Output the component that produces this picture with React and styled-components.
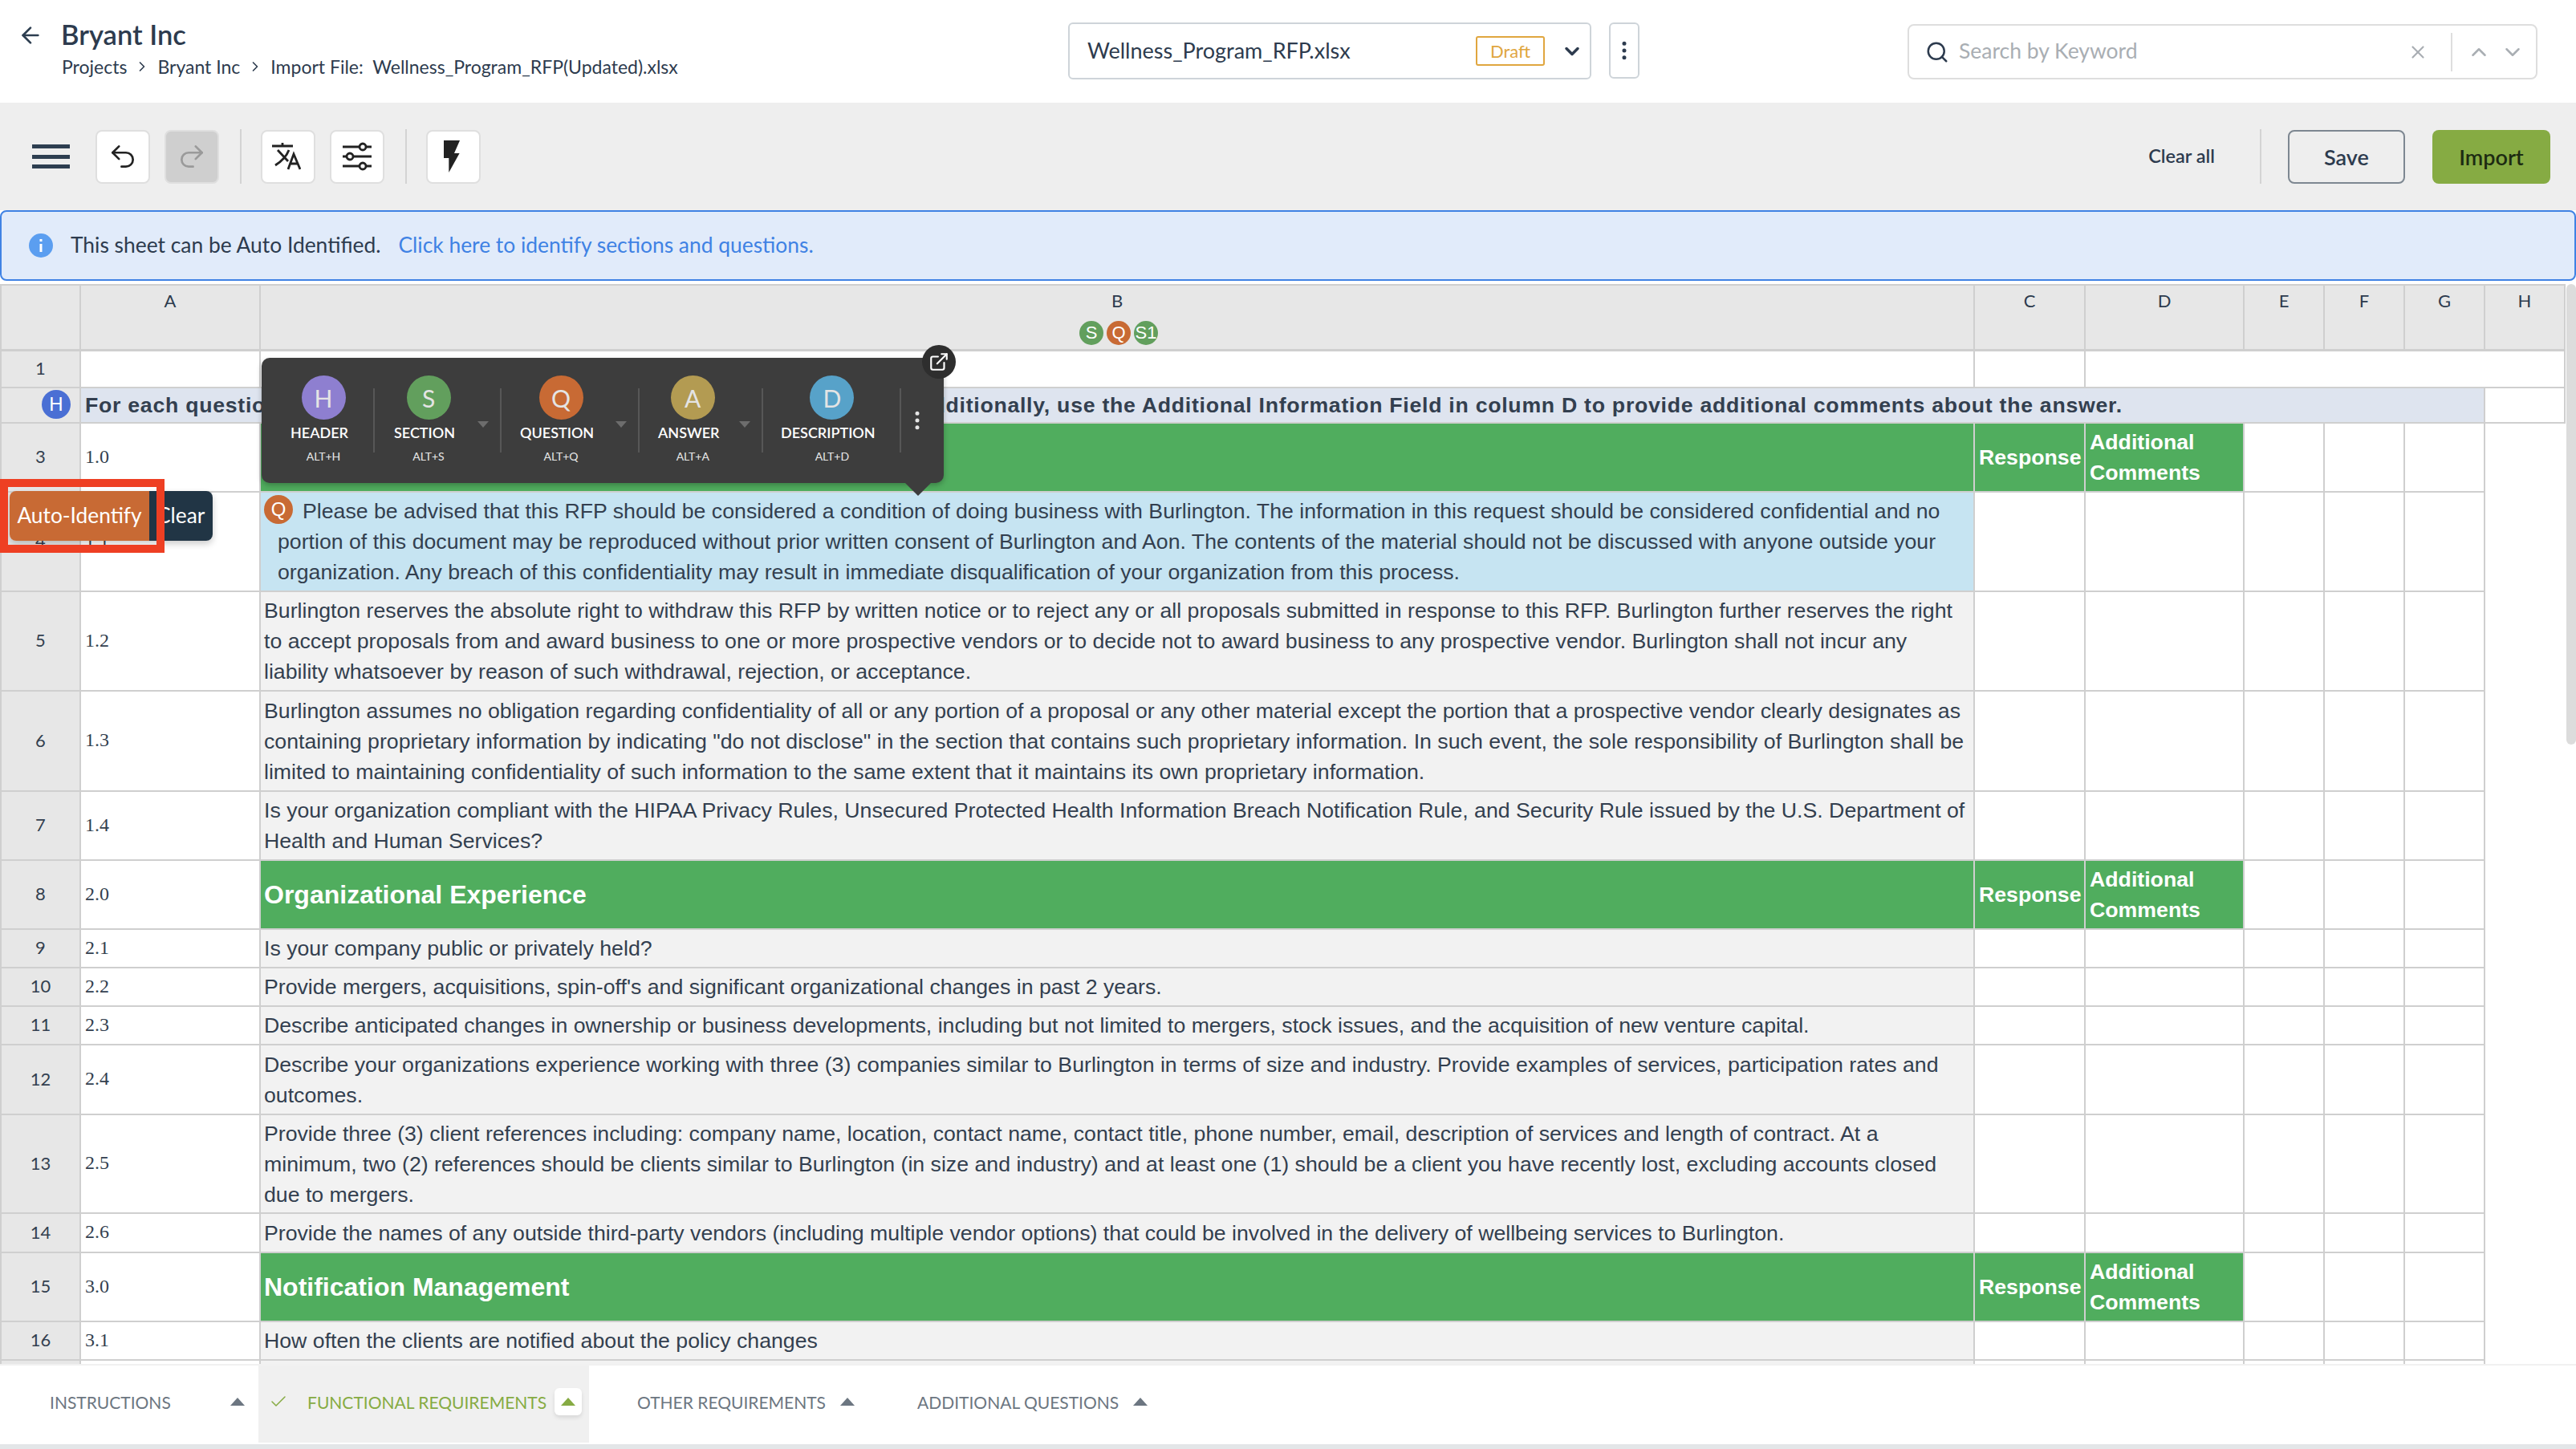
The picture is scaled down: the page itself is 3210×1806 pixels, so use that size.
import React from "react";
import styled, { createGlobalStyle } from "styled-components";
import {
  ArrowLeft,
  ChevronRight,
  ChevronDown,
  ChevronUp,
  EllipsisVertical,
  ExternalLink,
  Search,
  X,
  Undo2,
  Redo2,
  Check,
} from "lucide-react";

const UI_FONT = `"Lato", "Noto Sans", sans-serif`;
const SHEET_FONT = `"Liberation Sans", Arial, sans-serif`;

const GlobalStyle = createGlobalStyle`
  html, body {
    margin: 0;
    padding: 0;
    background: #fff;
    font-family: ${UI_FONT};
  }
`;

const Page = styled.div`
  width: 3210px;
  height: 1806px;
  display: flex;
  flex-direction: column;
  overflow: hidden;
  color: #2d3b4e;
`;

/* top header */
const Header = styled.header`
  height: 128px;
  flex: none;
  display: flex;
  align-items: flex-start;
  background: #fff;
`;
const BackSlot = styled.div`
  width: 76px;
  padding: 28px 0 0 22px;
  box-sizing: border-box;
  color: #2d3e50;
`;
const TitleBlock = styled.div`
  width: 1255px;
  padding-top: 20px;
`;
const Title = styled.div`
  font-size: 34.5px;
  font-weight: 600;
  line-height: 46px;
`;
const Crumbs = styled.div`
  display: flex;
  align-items: center;
  gap: 9px;
  font-size: 23px;
  line-height: 30px;
  margin: 2px 0 0 1px;
`;
const FileSelect = styled.div`
  width: 652px;
  height: 71px;
  margin-top: 28px;
  box-sizing: border-box;
  border: 2px solid #ced4d9;
  border-radius: 6px;
  display: flex;
  align-items: center;
  padding: 0 8px 0 22px;
`;
const FileName = styled.span`
  flex: 1;
  font-size: 27px;
  margin-bottom: 3px;
`;
const DraftBadge = styled.span`
  width: 86px;
  height: 37px;
  box-sizing: border-box;
  border: 2px solid #e0a63f;
  border-radius: 3px;
  color: #e0a63f;
  font-size: 22px;
  display: flex;
  align-items: center;
  justify-content: center;
  margin-right: 20px;
`;
const KebabButton = styled.div`
  width: 38px;
  height: 70px;
  margin: 28px 0 0 22px;
  box-sizing: border-box;
  border: 2px solid #ced4d9;
  border-radius: 6px;
  display: flex;
  align-items: center;
  justify-content: center;
`;
const SearchBox = styled.div`
  width: 785px;
  height: 69px;
  margin: 30px 0 0 334px;
  box-sizing: border-box;
  border: 2px solid #dedede;
  border-radius: 8px;
  display: flex;
  align-items: center;
  padding: 0 14px 0 20px;
`;
const SearchText = styled.span`
  flex: 1;
  margin: 0 0 3px 12px;
  font-size: 26.5px;
  color: #a9aeb3;
`;
const SearchDivider = styled.span`
  width: 2px;
  height: 48px;
  background: #dedede;
  margin: 0 18px 0 28px;
`;

/* toolbar */
const Toolbar = styled.div`
  height: 134px;
  flex: none;
  box-sizing: border-box;
  background: #eeeeee;
  display: flex;
  align-items: center;
  padding: 0 32px 0 40px;
`;
const Burger = styled.div`
  width: 47px;
  height: 30px;
  margin-right: 32px;
  display: flex;
  flex-direction: column;
  justify-content: space-between;
  span {
    height: 5px;
    background: #2d3e50;
  }
`;
const ToolButton = styled.div`
  width: 68px;
  height: 67px;
  box-sizing: border-box;
  border: 2px solid #dfdfdf;
  border-radius: 8px;
  background: ${(p) => (p.$disabled ? "#cfcfcf" : "#fff")};
  color: ${(p) => (p.$disabled ? "#9a9a9a" : "#222")};
  display: flex;
  align-items: center;
  justify-content: center;
  margin-right: ${(p) => p.$gap || 0}px;
  svg {
    margin-right: ${(p) => p.$nudge || 0}px;
  }
`;
const ToolDivider = styled.span`
  width: 2px;
  height: 68px;
  background: #d3d3d3;
  margin: 0 24px 0 26px;
`;
const SaveDivider = styled(ToolDivider)`
  margin: 0 33px 0 56px;
`;
const Spacer = styled.div`
  flex: 1;
`;
const ClearAll = styled.span`
  font-size: 23.5px;
  font-weight: 600;
  margin-top: -2px;
`;
const SaveButton = styled.div`
  width: 146px;
  height: 67px;
  box-sizing: border-box;
  border: 2px solid #7d8791;
  border-radius: 8px;
  font-size: 27px;
  font-weight: 600;
  display: flex;
  align-items: center;
  justify-content: center;
  margin-right: 34px;
`;
const ImportButton = styled(SaveButton)`
  width: 147px;
  border: 0;
  background: #86ab43;
  color: #1d2b12;
  margin-right: 0;
`;

/* auto identify banner */
const Banner = styled.div`
  height: 88px;
  flex: none;
  box-sizing: border-box;
  border: 2px solid #3f82e4;
  border-radius: 8px;
  background: #e1ebfa;
  display: flex;
  align-items: center;
  padding: 0 0 3px 34px;
  font-size: 26.4px;
  margin-bottom: 4px;
`;
const InfoIcon = styled.svg`
  width: 30px;
  height: 30px;
  margin: 3px 22px 0 0;
`;
const BannerLink = styled.span`
  color: #3f82e4;
  margin-left: 22px;
`;

/* sheet */
const SheetArea = styled.div`
  position: relative;
  flex: 1;
  min-height: 0;
  overflow: hidden;
  background: #fff;
`;
const Sheet = styled.table`
  width: 3197px;
  table-layout: fixed;
  border-collapse: separate;
  border-spacing: 0;
  font-family: ${SHEET_FONT};
  color: #333f4f;
`;
const ColHead = styled.th`
  height: 84px;
  box-sizing: border-box;
  padding: 6px 0 0;
  vertical-align: top;
  background: #e7e7e7;
  border-top: 2px solid #cfcfcf;
  border-right: 2px solid #cfcfcf;
  border-bottom: 3px solid #cfcfcf;
  font-family: ${UI_FONT};
  font-weight: 400;
  font-size: 22px;
  line-height: 26px;
  color: #2d3b4e;
  &:first-child {
    border-left: 2px solid #cfcfcf;
  }
`;
const ColBadges = styled.div`
  display: flex;
  justify-content: center;
  gap: 4px;
  margin: 12px 0 0 4px;
`;
const Badge = styled.span`
  width: ${(p) => p.$size || 30}px;
  height: ${(p) => p.$size || 30}px;
  border-radius: 50%;
  background: ${(p) => p.$color};
  color: #fff;
  font-family: ${SHEET_FONT};
  font-size: 22px;
  line-height: 1;
  display: inline-flex;
  align-items: center;
  justify-content: center;
  flex: none;
`;
const Gutter = styled.td`
  position: relative;
  box-sizing: border-box;
  height: ${(p) => p.$h}px;
  padding: 0 0 3px;
  background: #e7e7e7;
  border-left: 2px solid #cfcfcf;
  border-right: 2px solid #cfcfcf;
  border-bottom: 2px solid #cfcfcf;
  font-family: ${UI_FONT};
  font-size: 22px;
  text-align: center;
`;
const GutterBadge = styled(Badge)`
  position: absolute;
  right: 11px;
  top: 2px;
  font-size: 24px;
`;
const Cell = styled.td`
  box-sizing: border-box;
  padding: 0;
  background: ${(p) => p.$bg || "#fff"};
  border-right: ${(p) => (p.$noLines ? "0" : "2px solid #cfcfcf")};
  border-bottom: ${(p) => (p.$noLines ? "0" : "2px solid #cfcfcf")};
  vertical-align: middle;
`;
const NumberCell = styled(Cell)`
  padding: 0 0 2px 5px;
  font-family: "Liberation Serif", serif;
  font-size: 24px;
`;
const TextCell = styled(Cell)`
  position: relative;
  padding: 0 4px;
  font-size: 26.7px;
  line-height: 38px;
`;
const QuestionText = styled.div`
  padding-left: 17px;
  text-indent: 31px;
`;
const QuestionBadge = styled(Badge)`
  position: absolute;
  left: 4px;
  top: 3px;
  font-size: 24px;
`;
const SectionTitle = styled(Cell)`
  padding: 0 4px;
  background: #50ad5e;
  color: #fff;
  font-size: 32px;
  font-weight: 700;
`;
const SectionLabel = styled(Cell)`
  padding: 0 3px 0 5px;
  background: #50ad5e;
  color: #fff;
  font-size: 26.7px;
  line-height: 38px;
  font-weight: 700;
`;
const NoteCell = styled(Cell)`
  padding-left: 5px;
  background: #dee4ef;
  font-size: 26.7px;
  letter-spacing: 0.72px;
  font-weight: 700;
  white-space: nowrap;
  overflow: hidden;
`;
const SheetScroll = styled.div`
  position: absolute;
  right: 0;
  top: 0;
  width: 12px;
  height: 574px;
  border-radius: 6px;
  background: #dcdcdc;
`;

/* floating identify menu */
const Popover = styled.div`
  position: absolute;
  left: 326px;
  top: 92px;
  width: 850px;
  height: 156px;
  border-radius: 10px;
  background: #3d3d3d;
  box-shadow: 0 3px 6px rgba(0, 0, 0, 0.25);
  display: flex;
  align-items: flex-start;
  padding: 38px 0 0 12px;
  box-sizing: border-box;
  color: #fff;
  font-family: ${UI_FONT};
  &::after {
    content: "";
    position: absolute;
    left: 802px;
    bottom: -16px;
    border-left: 16px solid transparent;
    border-right: 16px solid transparent;
    border-top: 16px solid #3d3d3d;
  }
`;
const MenuItem = styled.div`
  position: relative;
  box-sizing: border-box;
  width: ${(p) => p.$w}px;
  height: 80px;
  padding-left: ${(p) => p.$pad || 24}px;
  border-right: 2px solid #575757;
`;
const MenuInner = styled.div`
  position: relative;
  display: inline-flex;
  flex-direction: column;
  align-items: center;
  margin-top: -16px;
`;
const MenuCircle = styled.span`
  width: 55px;
  height: 55px;
  border-radius: 50%;
  background: ${(p) => p.$color};
  color: #e4e4e4;
  font-size: 30px;
  display: flex;
  align-items: center;
  justify-content: center;
`;
const MenuLabel = styled.span`
  margin: 1px 10px 0 0;
  font-size: 18px;
  font-weight: 600;
  line-height: 30px;
  white-space: nowrap;
`;
const MenuKey = styled.span`
  margin-top: 3px;
  font-size: 14px;
  line-height: 24px;
  white-space: nowrap;
  color: #e8e8e8;
`;
const MenuCaret = styled.span`
  position: absolute;
  right: 14px;
  top: 41px;
  border-left: 7px solid transparent;
  border-right: 7px solid transparent;
  border-top: 8px solid #6d6d6d;
`;
const MenuMore = styled.div`
  width: 40px;
  display: flex;
  justify-content: center;
  margin-top: 25px;
`;
const ExpandButton = styled.div`
  position: absolute;
  right: -15px;
  top: -16px;
  width: 42px;
  height: 42px;
  border-radius: 50%;
  background: #2e2e2e;
  display: flex;
  align-items: center;
  justify-content: center;
`;

/* auto identify hint */
const HintGroup = styled.div`
  position: absolute;
  left: 12px;
  top: 258px;
  height: 62px;
  display: flex;
  font-size: 26.3px;
  color: #fff;
  box-shadow: 0 4px 8px rgba(0, 0, 0, 0.2);
  border-radius: 8px;
`;
const AutoButton = styled.div`
  width: 174px;
  padding-bottom: 3px;
  box-sizing: border-box;
  background: #c86a34;
  border-radius: 8px 0 0 8px;
  display: flex;
  align-items: center;
  justify-content: center;
`;
const ClearButton = styled.div`
  width: 79px;
  padding: 0 0 3px 9px;
  background: #213545;
  border-radius: 0 8px 8px 0;
  display: flex;
  align-items: center;
  box-sizing: border-box;
`;
const RedFrame = styled.div`
  position: absolute;
  left: 0;
  top: 243px;
  width: 205px;
  height: 92px;
  box-sizing: border-box;
  border: 10px solid #ee3f23;
`;

/* sheet tabs */
const Tabs = styled.div`
  height: 100px;
  flex: none;
  box-sizing: border-box;
  display: flex;
  align-items: stretch;
  background: #fff;
  border-top: 2px solid #f1f1f1;
  padding: 0 0 2px 2px;
  font-size: 21px;
  color: #6c7681;
  white-space: nowrap;
`;
const Tab = styled.div`
  width: ${(p) => (p.$w ? `${p.$w}px` : "auto")};
  box-sizing: border-box;
  display: flex;
  align-items: center;
  padding: 0 0 6px ${(p) => p.$pad}px;
  background: ${(p) => (p.$active ? "#f0f0f0" : "transparent")};
  color: ${(p) => (p.$active ? "#86ab43" : "inherit")};
`;
const TabCaret = styled.span`
  margin-left: ${(p) => p.$gap ?? 18}px;
  border-left: 9px solid transparent;
  border-right: 9px solid transparent;
  border-bottom: 10px solid currentColor;
`;
const CheckMark = styled(Check)`
  margin-right: 24px;
`;
const CaretButton = styled.span`
  width: 34px;
  height: 34px;
  margin-left: 10px;
  border-radius: 6px;
  background: #fff;
  box-shadow: 0 3px 5px rgba(0, 0, 0, 0.1);
  display: flex;
  align-items: center;
  justify-content: center;
`;
const BottomStrip = styled.div`
  height: 6px;
  flex: none;
  background: #e3e6e8;
`;

const COLUMN_WIDTHS = [101, 224, 2136, 138, 198, 100, 100, 100, 100];
const COLOR = { H: "#8e7fd0", S: "#629f5d", Q: "#c86a34", A: "#b39b52", D: "#57a2c9" };

const RULE_ROWS = [
  { n: 5, a: "1.2", h: 124, text: "Burlington reserves the absolute right to withdraw this RFP by written notice or to reject any or all proposals submitted in response to this RFP. Burlington further reserves the right to accept proposals from and award business to one or more prospective vendors or to decide not to award business to any prospective vendor. Burlington shall not incur any liability whatsoever by reason of such withdrawal, rejection, or acceptance." },
  { n: 6, a: "1.3", h: 125, text: "Burlington assumes no obligation regarding confidentiality of all or any portion of a proposal or any other material except the portion that a prospective vendor clearly designates as containing proprietary information by indicating \"do not disclose\" in the section that contains such proprietary information. In such event, the sole responsibility of Burlington shall be limited to maintaining confidentiality of such information to the same extent that it maintains its own proprietary information." },
  { n: 7, a: "1.4", h: 86, text: "Is your organization compliant with the HIPAA Privacy Rules, Unsecured Protected Health Information Breach Notification Rule, and Security Rule issued by the U.S. Department of Health and Human Services?" },
  { n: 8, a: "2.0", h: 86, section: "Organizational Experience" },
  { n: 9, a: "2.1", h: 48, text: "Is your company public or privately held?" },
  { n: 10, a: "2.2", h: 48, text: "Provide mergers, acquisitions, spin-off's and significant organizational changes in past 2 years." },
  { n: 11, a: "2.3", h: 48, text: "Describe anticipated changes in ownership or business developments, including but not limited to mergers, stock issues, and the acquisition of new venture capital." },
  { n: 12, a: "2.4", h: 87, text: "Describe your organizations experience working with three (3) companies similar to Burlington in terms of size and industry. Provide examples of services, participation rates and outcomes." },
  { n: 13, a: "2.5", h: 123, text: "Provide three (3) client references including: company name, location, contact name, contact title, phone number, email, description of services and length of contract. At a minimum, two (2) references should be clients similar to Burlington (in size and industry) and at least one (1) should be a client you have recently lost, excluding accounts closed due to mergers." },
  { n: 14, a: "2.6", h: 49, text: "Provide the names of any outside third-party vendors (including multiple vendor options) that could be involved in the delivery of wellbeing services to Burlington." },
  { n: 15, a: "3.0", h: 86, section: "Notification Management" },
  { n: 16, a: "3.1", h: 48, text: "How often the clients are notified about the policy changes" },
  { n: 17, a: "", h: 48, text: "" },
];

const MENU = [
  { key: "H", label: "HEADER", w: 129, pad: 24 },
  { key: "S", label: "SECTION", w: 158, pad: 24, caret: true },
  { key: "Q", label: "QUESTION", w: 172, pad: 23, caret: true },
  { key: "A", label: "ANSWER", w: 154, pad: 23, caret: true },
  { key: "D", label: "DESCRIPTION", w: 172, pad: 22 },
];

function SpareCells({ lastRows }) {
  return (
    <>
      <Cell />
      <Cell />
      <Cell />
      <Cell />
      <Cell />
      {lastRows ? <Cell $noLines rowSpan={lastRows} /> : null}
    </>
  );
}

function SectionCells({ title, lastRows }) {
  return (
    <>
      <SectionTitle>{title}</SectionTitle>
      <SectionLabel>Response</SectionLabel>
      <SectionLabel>
        Additional
        <br />
        Comments
      </SectionLabel>
      <Cell />
      <Cell />
      <Cell />
      {lastRows ? <Cell $noLines rowSpan={lastRows} /> : null}
    </>
  );
}

function SheetTable() {
  return (
    <Sheet>
      <colgroup>
        {COLUMN_WIDTHS.map((w, i) => (
          <col key={i} style={{ width: w }} />
        ))}
      </colgroup>
      <thead>
        <tr>
          <ColHead />
          <ColHead>A</ColHead>
          <ColHead>
            B
            <ColBadges>
              <Badge $color={COLOR.S}>S</Badge>
              <Badge $color={COLOR.Q}>Q</Badge>
              <Badge $color={COLOR.S}>S1</Badge>
            </ColBadges>
          </ColHead>
          {["C", "D", "E", "F", "G", "H"].map((c) => (
            <ColHead key={c}>{c}</ColHead>
          ))}
        </tr>
      </thead>
      <tbody>
        <tr>
          <Gutter $h={46}>1</Gutter>
          <Cell />
          <Cell />
          <Cell />
          <Cell colSpan={5} />
        </tr>
        <tr>
          <Gutter $h={44}>
            <GutterBadge $size={36} $color="#4a6fd4">H</GutterBadge>
          </Gutter>
          <NoteCell colSpan={7}>
            For each question, please select the appropriate responses within column C. Additionally, use the Additional Information Field in column D to provide additional comments about the answer.
          </NoteCell>
          <Cell />
        </tr>
        <tr>
          <Gutter $h={86}>3</Gutter>
          <NumberCell>1.0</NumberCell>
          <SectionCells lastRows={RULE_ROWS.length + 2} />
        </tr>
        <tr>
          <Gutter $h={124}>4</Gutter>
          <NumberCell>1.1</NumberCell>
          <TextCell $bg="#c6e4f2">
            <QuestionBadge $size={36} $color={COLOR.Q}>Q</QuestionBadge>
            <QuestionText>
              Please be advised that this RFP should be considered a condition of doing business with Burlington. The information in this request should be considered confidential and no portion of this document may be reproduced without prior written consent of Burlington and Aon. The contents of the material should not be discussed with anyone outside your organization. Any breach of this confidentiality may result in immediate disqualification of your organization from this process.
            </QuestionText>
          </TextCell>
          <SpareCells />
        </tr>
        {RULE_ROWS.map((row) => (
          <tr key={row.n}>
            <Gutter $h={row.h}>{row.n}</Gutter>
            <NumberCell>{row.a}</NumberCell>
            {row.section ? (
              <SectionCells title={row.section} />
            ) : (
              <>
                <TextCell $bg="#f2f2f2">{row.text}</TextCell>
                <SpareCells />
              </>
            )}
          </tr>
        ))}
      </tbody>
    </Sheet>
  );
}

function IdentifyMenu() {
  return (
    <Popover>
      {MENU.map((item) => (
        <MenuItem key={item.key} $w={item.w} $pad={item.pad}>
          <MenuInner>
            <MenuCircle $color={COLOR[item.key]}>{item.key}</MenuCircle>
            <MenuLabel>{item.label}</MenuLabel>
            <MenuKey>ALT+{item.key}</MenuKey>
          </MenuInner>
          {item.caret ? <MenuCaret /> : null}
        </MenuItem>
      ))}
      <MenuMore>
        <EllipsisVertical size={30} color="#e6e6e6" fill="#e6e6e6" />
      </MenuMore>
      <ExpandButton>
        <ExternalLink size={26} color="#fff" />
      </ExpandButton>
    </Popover>
  );
}

export default function App() {
  return (
    <Page>
      <GlobalStyle />
      <Header>
        <BackSlot>
          <ArrowLeft size={32} />
        </BackSlot>
        <TitleBlock>
          <Title>Bryant Inc</Title>
          <Crumbs>
            Projects <ChevronRight size={20} /> Bryant Inc <ChevronRight size={20} /> Import File:&nbsp; Wellness_Program_RFP(Updated).xlsx
          </Crumbs>
        </TitleBlock>
        <FileSelect>
          <FileName>Wellness_Program_RFP.xlsx</FileName>
          <DraftBadge>Draft</DraftBadge>
          <ChevronDown size={28} strokeWidth={3} />
        </FileSelect>
        <KebabButton>
          <EllipsisVertical size={30} fill="#2d3e50" />
        </KebabButton>
        <SearchBox>
          <Search size={30} />
          <SearchText>Search by Keyword</SearchText>
          <X size={26} color="#a9aeb3" />
          <SearchDivider />
          <ChevronUp size={30} color="#a9aeb3" />
          <ChevronDown size={30} color="#a9aeb3" style={{ marginLeft: 12 }} />
        </SearchBox>
      </Header>

      <Toolbar>
        <Burger>
          <span />
          <span />
          <span />
        </Burger>
        <ToolButton $gap={18}>
          <Undo2 size={38} strokeWidth={1.7} />
        </ToolButton>
        <ToolButton $disabled>
          <Redo2 size={38} strokeWidth={1.7} />
        </ToolButton>
        <ToolDivider />
        <ToolButton $gap={18} $nudge={5}>
          <svg width="36" height="34" viewBox="0 0 36 34" fill="none" stroke="#222" strokeWidth="2.8">
            <path d="M0 4h26M13 0v4M7 9l13 14M21 9C18 17 12 23 4 28M20 33L27 14l8 19M23 26h9" />
          </svg>
        </ToolButton>
        <ToolButton>
          <svg width="36" height="38" viewBox="0 0 36 38" fill="none" stroke="#222" strokeWidth="2.8">
            <path d="M0 7h36M0 19h36M0 31h36" />
            <circle cx="25" cy="7" r="4" fill="#fff" />
            <circle cx="9" cy="19" r="4" fill="#fff" />
            <circle cx="25" cy="31" r="4" fill="#fff" />
          </svg>
        </ToolButton>
        <ToolDivider />
        <ToolButton $nudge={5}>
          <svg width="20" height="40" viewBox="0 0 20 40" fill="#222">
            <path d="M0 0h20l-7 16h6.600L6.300 40V22H0z" />
          </svg>
        </ToolButton>
        <Spacer />
        <ClearAll>Clear all</ClearAll>
        <SaveDivider />
        <SaveButton>Save</SaveButton>
        <ImportButton>Import</ImportButton>
      </Toolbar>

      <Banner>
        <InfoIcon viewBox="0 0 30 30">
          <circle cx="15" cy="15" r="15" fill="#5b9ef0" />
          <rect x="13.500" y="13" width="3" height="10" fill="#fff" />
          <rect x="13.500" y="7" width="3" height="3" fill="#fff" />
        </InfoIcon>
        This sheet can be Auto Identified.
        <BannerLink>Click here to identify sections and questions.</BannerLink>
      </Banner>

      <SheetArea>
        <SheetTable />
        <SheetScroll />
        <IdentifyMenu />
        <HintGroup>
          <AutoButton>Auto-Identify</AutoButton>
          <ClearButton>Clear</ClearButton>
        </HintGroup>
        <RedFrame />
      </SheetArea>

      <Tabs>
        <Tab $w={320} $pad={60}>
          INSTRUCTIONS
          <TabCaret $gap={74} />
        </Tab>
        <Tab $w={412} $active $pad={13}>
          <CheckMark size={24} strokeWidth={1.5} />
          FUNCTIONAL REQUIREMENTS
          <CaretButton>
            <TabCaret $gap={0} />
          </CaretButton>
        </Tab>
        <Tab $pad={60}>
          OTHER REQUIREMENTS
          <TabCaret />
        </Tab>
        <Tab $pad={78}>
          ADDITIONAL QUESTIONS
          <TabCaret />
        </Tab>
      </Tabs>
      <BottomStrip />
    </Page>
  );
}
